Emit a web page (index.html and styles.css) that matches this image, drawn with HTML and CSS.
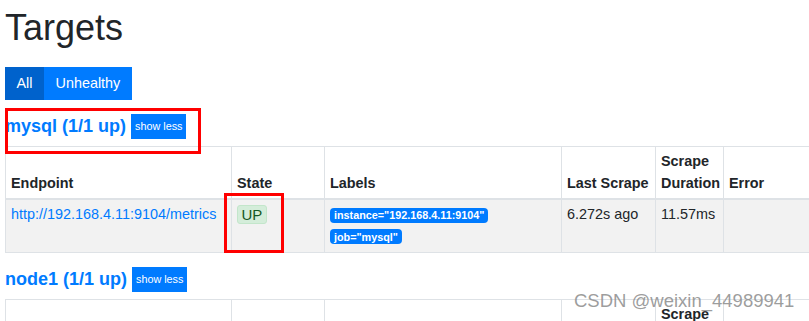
FILE: index.html
```html
<!DOCTYPE html>
<html>
<head>
  <link rel="stylesheet" href="styles.css">
</head>
<body>
  <h1 class="page-title">Targets</h1>
  <div class="btn-group">
    <button class="btn active">All</button>
    <button class="btn">Unhealthy</button>
  </div>

  <div class="job">
    <div class="job-heading">
      <a href="#mysql">mysql (1/1 up)</a>
      <button class="btn btn-sm">show less</button>
    </div>
    <table class="targets">
      <thead>
        <tr>
          <th class="col-endpoint">Endpoint</th>
          <th class="col-state">State</th>
          <th class="col-labels">Labels</th>
          <th class="col-last">Last Scrape</th>
          <th class="col-duration">Scrape Duration</th>
          <th>Error</th>
        </tr>
      </thead>
      <tbody>
        <tr>
          <td><a href="#">http://192.168.4.11:9104/metrics</a></td>
          <td><span class="state-up">UP</span></td>
          <td>
            <div><span class="label-badge">instance="192.168.4.11:9104"</span></div>
            <div><span class="label-badge">job="mysql"</span></div>
          </td>
          <td>6.272s ago</td>
          <td>11.57ms</td>
          <td></td>
        </tr>
      </tbody>
    </table>
  </div>

  <div class="job">
    <div class="job-heading">
      <a href="#node1">node1 (1/1 up)</a>
      <button class="btn btn-sm">show less</button>
    </div>
    <table class="targets">
      <thead>
        <tr>
          <th class="col-endpoint">Endpoint</th>
          <th class="col-state">State</th>
          <th class="col-labels">Labels</th>
          <th class="col-last">Last Scrape</th>
          <th class="col-duration">Scrape Duration</th>
          <th>Error</th>
        </tr>
      </thead>
      <tbody>
        <tr>
          <td><a href="#">http://192.168.4.11:9100/metrics</a></td>
          <td><span class="state-up">UP</span></td>
          <td>
            <div><span class="label-badge">instance="192.168.4.11:9100"</span></div>
            <div><span class="label-badge">job="node1"</span></div>
          </td>
          <td>3.108s ago</td>
          <td>24.31ms</td>
          <td></td>
        </tr>
      </tbody>
    </table>
  </div>

  <div class="mark mark-heading"></div>
  <div class="mark mark-state"></div>
  <div class="watermark">CSDN @weixin_44989941</div>
</body>
</html>
```

FILE: styles.css
```css
body {
  margin: 0;
  padding: 7px 0 0 5px;
  font-family: "Liberation Sans", Arial, sans-serif;
  font-size: 14.4px;
  line-height: 21.6px;
  color: #212529;
  background: #fff;
  overflow: hidden;
}
a {
  color: #007bff;
  text-decoration: none;
}
.page-title {
  font-size: 36px;
  font-weight: normal;
  line-height: 42px;
  margin: 0 0 18px;
}
.btn-group {
  display: flex;
}
.btn {
  background-color: #007bff;
  color: #fff;
  border: none;
  font-family: inherit;
  font-size: 14.4px;
  line-height: 21px;
  padding: 6px 11.5px;
  cursor: pointer;
}
.btn.active {
  background-color: #0062cc;
}
.job-heading {
  display: flex;
  align-items: center;
  height: 25px;
  margin-top: 14px;
}
.job-heading a {
  font-size: 18px;
  font-weight: bold;
}
.btn.btn-sm {
  font-size: 10.8px;
  line-height: 17px;
  padding: 4px 4px;
  margin-left: 5px;
}
.targets {
  margin-top: 7px;
  width: 1000px;
  table-layout: fixed;
  border-collapse: collapse;
}
.targets th,
.targets td {
  border: 1px solid #dee2e6;
  padding: 4.5px 5px;
  text-align: left;
  vertical-align: top;
}
.targets th {
  vertical-align: bottom;
  padding-top: 4px;
  padding-bottom: 4px;
  border-bottom-width: 2px;
}
.targets td {
  padding-top: 4px;
}
.targets tbody tr {
  background-color: #f2f2f2;
}
.col-endpoint { width: 215px; }
.col-state { width: 82px; }
.col-labels { width: 226px; }
.col-last { width: 83px; }
.col-duration { width: 57px; }
.state-up {
  display: inline-block;
  background-color: #d4edda;
  border: 1px solid #c3e6cb;
  color: #155724;
  font-size: 15px;
  border-radius: 3px;
  padding: 0 3.5px;
  line-height: 17px;
  margin-top: 1px;
}
.label-badge {
  display: inline-block;
  background-color: #007bff;
  color: #fff;
  font-size: 10.8px;
  font-weight: bold;
  line-height: 12px;
  padding: 1.5px 4px;
  border-radius: 4px;
}
.mark {
  position: absolute;
  border: 3px solid #f00;
  box-sizing: border-box;
}
.mark-heading {
  left: 5px;
  top: 108px;
  width: 196px;
  height: 46px;
}
.mark-state {
  left: 224px;
  top: 193px;
  width: 60px;
  height: 60px;
}
.watermark {
  position: absolute;
  left: 574px;
  top: 289px;
  font-size: 18.5px;
  line-height: 24px;
  color: rgba(140, 140, 140, 0.85);
  white-space: nowrap;
}
```
